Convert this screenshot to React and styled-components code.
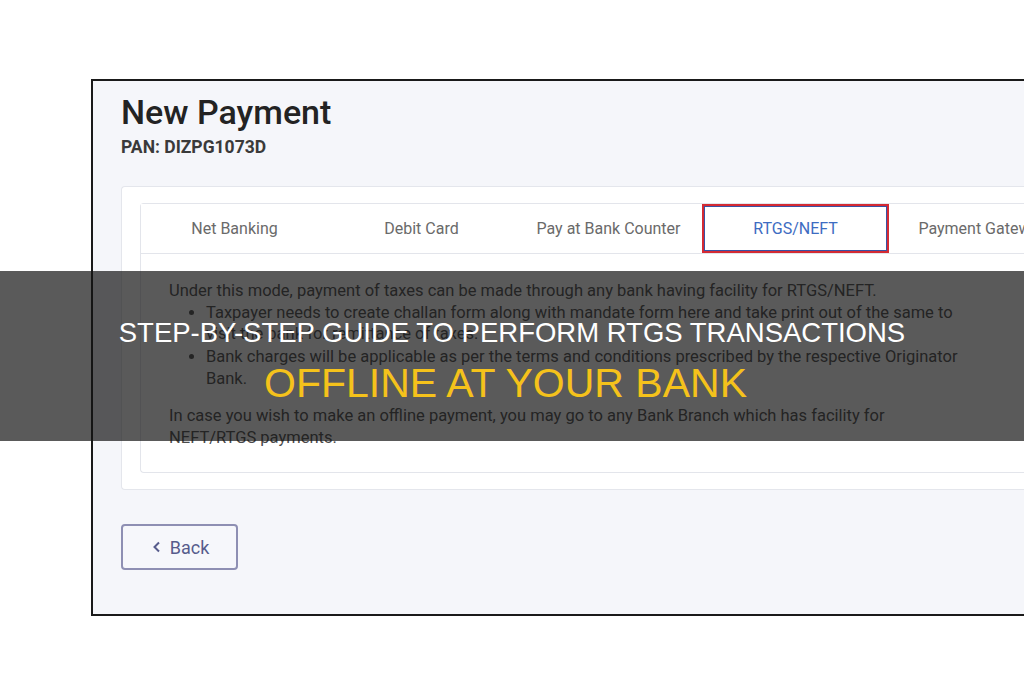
import React from 'react';
import styled, { createGlobalStyle } from 'styled-components';

const GlobalStyle = createGlobalStyle`
  html, body {
    margin: 0;
    padding: 0;
    background: #ffffff;
    overflow: hidden;
  }

  body {
    font-family: Roboto, "Liberation Sans", Arial, sans-serif;
  }
`

const Page = styled.div`
  position: relative;
  width: 1024px;
  height: 680px;
  padding: 79px 0 0 91px;
  box-sizing: border-box;
`

const Frame = styled.div`
  width: 1000px;
  height: 537px;
  box-sizing: border-box;
  border: 2px solid #1a1a1a;
  border-right: none;
  background: #f5f6fa;
  padding: 11px 0 0 28px;
  display: flex;
  flex-direction: column;
`

const Title = styled.h1`
  margin: 0;
  font-size: 34px;
  line-height: 40px;
  font-weight: 500;
  color: #232323;
`

const Pan = styled.div`
  margin-top: 4px;
  font-size: 17.5px;
  line-height: 22px;
  font-weight: 700;
  color: #3a3a3a;
`

const Card = styled.div`
  margin-top: 28px;
  height: 304px;
  box-sizing: border-box;
  background: #ffffff;
  border: 1px solid #e4e6ec;
  border-right: none;
  border-radius: 4px 0 0 4px;
  padding: 16px 0 0 18px;
`

const TabBox = styled.div`
  height: 270px;
  box-sizing: border-box;
  border: 1px solid #e3e5eb;
  border-right: none;
  border-radius: 4px 0 0 4px;
  display: flex;
  flex-direction: column;
`

const TabBar = styled.div`
  display: flex;
  height: 49px;
  border-bottom: 1px solid #e3e5eb;
`

const Tab = styled.div`
  flex: 0 0 187px;
  box-sizing: border-box;
  display: flex;
  align-items: center;
  justify-content: center;
  font-size: 16px;
  color: ${p => (p.$active ? '#3d6cc2' : '#6a6a6a')};
  background: #ffffff;
  border: ${p => (p.$active ? '2px solid #d42a33' : 'none')};
  box-shadow: ${p => (p.$active ? 'inset 0 0 0 1px #3852a4' : 'none')};
  white-space: nowrap;
`

const Body = styled.div`
  width: 795px;
  padding: 26px 0 0 28px;
  font-size: 16.5px;
  line-height: 21.5px;
  color: #4a4a4a;

  p {
    margin: 0;
  }

  ul {
    margin: 0 0 16px;
    padding-left: 37px;
  }

  li + li {
    margin-top: 1.5px;
  }
`

const BackButton = styled.button`
  margin-top: 34px;
  width: 117px;
  height: 46px;
  box-sizing: border-box;
  border: 2px solid #8e8fb3;
  border-radius: 4px;
  background: #f6f7fb;
  color: #575c8c;
  font-family: Roboto, "Liberation Sans", Arial, sans-serif;
  font-size: 18px;
  display: flex;
  align-items: center;
  justify-content: center;
  gap: 9px;
  padding: 0 0 0 2px;
`

const Banner = styled.div`
  position: absolute;
  left: 0;
  right: 0;
  top: 271px;
  height: 170px;
  background: rgba(20, 20, 20, 0.7);
  display: flex;
  flex-direction: column;
  align-items: center;
  gap: 11px;
  padding-top: 46px;
  box-sizing: border-box;
  font-family: "Liberation Sans", Arial, sans-serif;
`

const BannerLine = styled.div`
  font-size: ${p => p.$size}px;
  line-height: ${p => p.$lh}px;
  color: ${p => p.$color};
  margin-right: ${p => p.$nudge || 0}px;
  text-transform: uppercase;
  white-space: nowrap;
`

const tabs = ['Net Banking', 'Debit Card', 'Pay at Bank Counter', 'RTGS/NEFT', 'Payment Gateway'];

const App = () => {
    return (
        <Page>
            <GlobalStyle />
            <Frame>
                <Title>New Payment</Title>
                <Pan>PAN: DIZPG1073D</Pan>
                <Card>
                    <TabBox>
                        <TabBar>
                            {tabs.map(t => (
                                <Tab key={t} $active={t === 'RTGS/NEFT'}>{t}</Tab>
                            ))}
                        </TabBar>
                        <Body>
                            <p>Under this mode, payment of taxes can be made through any bank having facility for RTGS/NEFT.</p>
                            <ul>
                                <li>Taxpayer needs to create challan form along with mandate form here and take print out of the same to visit the bank for remittance of taxes.</li>
                                <li>Bank charges will be applicable as per the terms and conditions prescribed by the respective Originator Bank.</li>
                            </ul>
                            <p>In case you wish to make an offline payment, you may go to any Bank Branch which has facility for NEFT/RTGS payments.</p>
                        </Body>
                    </TabBox>
                </Card>
                <BackButton>
                    <svg width="9" height="12" viewBox="0 0 9 12">
                        <path d="M7 1.5 L2.5 6 L7 10.5" fill="none" stroke="#575c8c" strokeWidth="2" />
                    </svg>
                    Back
                </BackButton>
            </Frame>
            <Banner>
                <BannerLine $size={27.5} $lh={32} $color="#ffffff">Step-by-step guide to perform RTGS transactions</BannerLine>
                <BannerLine $size={41} $lh={46} $nudge={13} $color="#f5c21b">Offline at your bank</BannerLine>
            </Banner>
        </Page>
    );
};

export default App;
